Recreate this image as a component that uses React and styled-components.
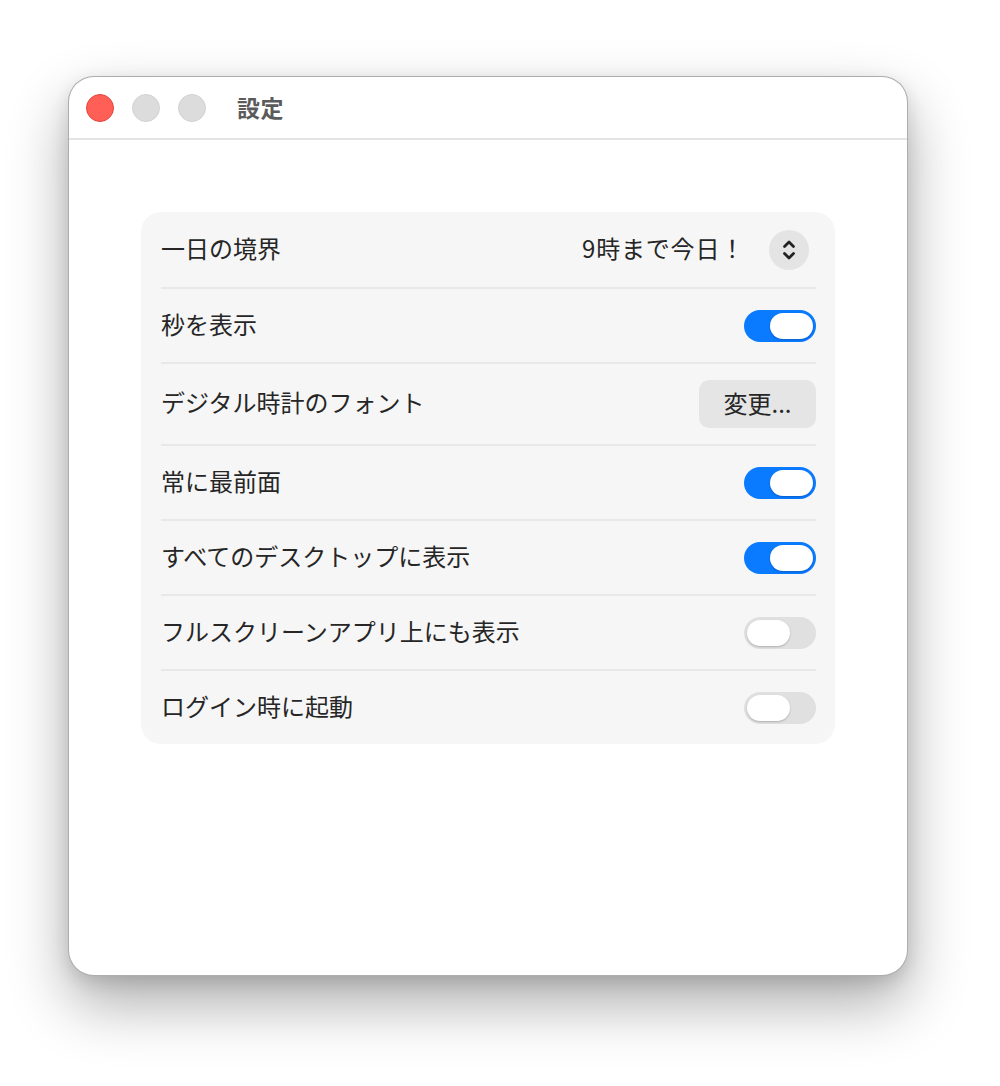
import React from "react";
import styled, { createGlobalStyle } from "styled-components";

const Global = createGlobalStyle`
  html, body { margin: 0; padding: 0; background: #ffffff; }
  body { font-family: "Noto Sans CJK JP", "Noto Sans", sans-serif; }
`;

const Page = styled.div`
  width: 1000px;
  height: 1086px;
  padding: 76px 0 0 68px;
  box-sizing: border-box;
  background: #fff;
`;

const Window = styled.div`
  width: 840px;
  height: 900px;
  border-radius: 26px;
  background: #fff;
  box-sizing: border-box;
  border: 1px solid rgba(0, 0, 0, 0.32);
  box-shadow: 0 28px 60px rgba(0, 0, 0, 0.32), 0 6px 18px rgba(0, 0, 0, 0.12);
  overflow: hidden;
  display: flex;
  flex-direction: column;
`;

const TitleBar = styled.div`
  height: 60px;
  flex: none;
  display: flex;
  align-items: center;
  padding: 1px 0 0 17px;
  border-bottom: 2px solid #e3e3e3;
`;

const Lights = styled.div`
  display: flex;
  gap: 18px;
  margin-right: 31px;
`;

const Light = styled.span`
  width: 28px;
  height: 28px;
  border-radius: 50%;
  box-sizing: border-box;
  background: ${(p) => (p.$red ? "#ff5f57" : "#dcdcdc")};
  border: 1px solid ${(p) => (p.$red ? "#e2463f" : "#d2d2d2")};
`;

const Title = styled.div`
  font-size: 23px;
  font-weight: 700;
  color: #5b5b5b;
  letter-spacing: 0.5px;
  padding-bottom: 2px;
`;

const Body = styled.div`
  padding: 72px 72px 0 72px;
`;

const Card = styled.div`
  background: #f6f6f6;
  border-radius: 20px;
  padding: 0 19px 0 20px;
`;

const Row = styled.div`
  height: ${(p) => p.$h}px;
  display: flex;
  align-items: center;
  justify-content: space-between;
  border-top: ${(p) => (p.$first ? "none" : "2px solid #e8e8e8")};
  box-sizing: border-box;
`;

const Label = styled.span`
  font-size: 24px;
  font-weight: 400;
  color: #262626;
  padding-bottom: 5px;
`;

const Right = styled.div`
  display: flex;
  align-items: center;
  gap: 24px;
`;

const Value = styled.span`
  font-size: 24px;
  font-weight: 400;
  color: #262626;
  letter-spacing: 0.8px;
  padding-bottom: 5px;
`;

const Stepper = styled.div`
  width: 40px;
  height: 40px;
  border-radius: 50%;
  background: #e4e4e4;
  display: flex;
  align-items: center;
  justify-content: center;
  margin-right: 7px;
`;

const Toggle = styled.div`
  width: 72px;
  height: 32px;
  border-radius: 16px;
  background: ${(p) => (p.$on ? "#0a7aff" : "#e0e0e0")};
  box-sizing: border-box;
  padding: 3px;
  display: flex;
  justify-content: ${(p) => (p.$on ? "flex-end" : "flex-start")};
`;

const Knob = styled.span`
  width: 43px;
  height: 26px;
  border-radius: 13px;
  background: #fff;
  box-shadow: 0 1px 2px rgba(0, 0, 0, 0.22);
`;

const Button = styled.div`
  width: 117px;
  height: 48px;
  border-radius: 10px;
  background: #e5e5e5;
  display: flex;
  align-items: center;
  justify-content: center;
  font-size: 24px;
  font-weight: 400;
  color: #262626;
  box-sizing: border-box;
  padding-bottom: 4px;
`;

export default function App() {
  return (
    <Page>
      <Global />
      <Window>
        <TitleBar>
          <Lights>
            <Light $red />
            <Light />
            <Light />
          </Lights>
          <Title>設定</Title>
        </TitleBar>
        <Body>
          <Card>
            <Row $first $h={75}>
              <Label>一日の境界</Label>
              <Right>
                <Value>9時まで今日！</Value>
                <Stepper>
                  <svg width="14" height="24" viewBox="0 0 14 24" fill="none" stroke="#222" strokeWidth="2.8" strokeLinecap="round" strokeLinejoin="round">
                    <path d="M2.5 8.5 L7 4 L11.5 8.5" />
                    <path d="M2.5 15.5 L7 20 L11.5 15.5" />
                  </svg>
                </Stepper>
              </Right>
            </Row>
            <Row $h={75}>
              <Label>秒を表示</Label>
              <Toggle $on><Knob /></Toggle>
            </Row>
            <Row $h={82}>
              <Label>デジタル時計のフォント</Label>
              <Button>変更...</Button>
            </Row>
            <Row $h={75}>
              <Label>常に最前面</Label>
              <Toggle $on><Knob /></Toggle>
            </Row>
            <Row $h={75}>
              <Label>すべてのデスクトップに表示</Label>
              <Toggle $on><Knob /></Toggle>
            </Row>
            <Row $h={75}>
              <Label>フルスクリーンアプリ上にも表示</Label>
              <Toggle><Knob /></Toggle>
            </Row>
            <Row $h={75}>
              <Label>ログイン時に起動</Label>
              <Toggle><Knob /></Toggle>
            </Row>
          </Card>
        </Body>
      </Window>
    </Page>
  );
}
